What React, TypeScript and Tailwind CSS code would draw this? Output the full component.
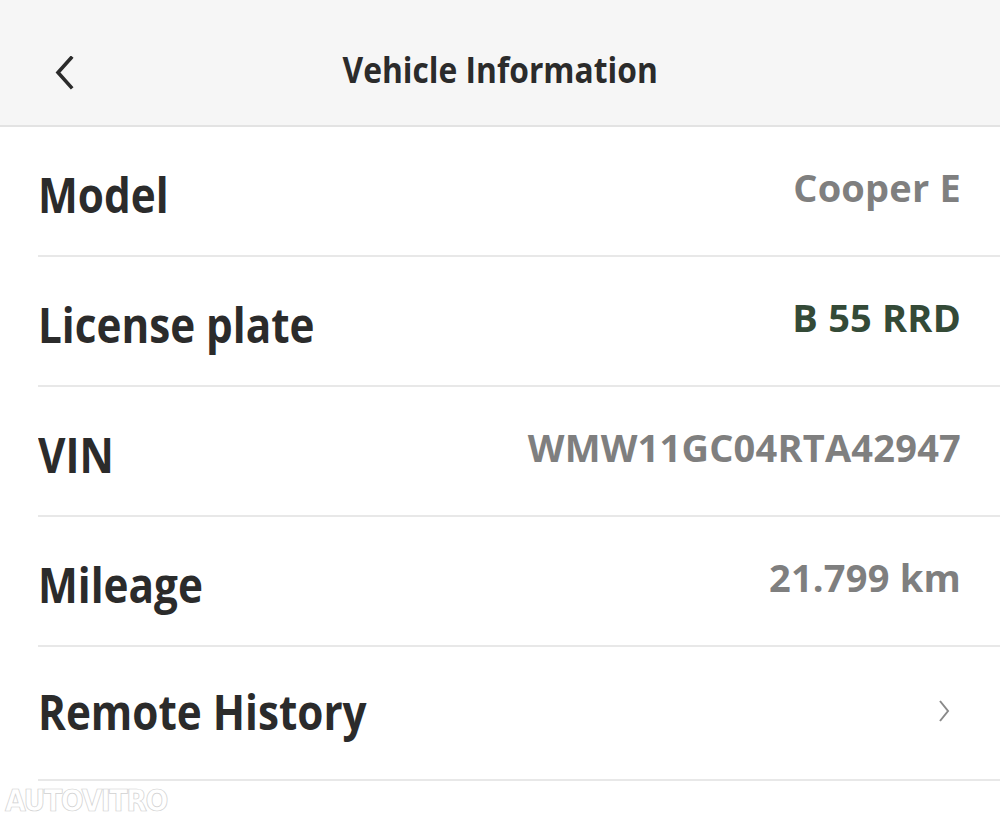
import React from "react";

type Row = {
  label: string;
  value?: string;
  valueClass?: string;
  link?: boolean;
};

const rows: Row[] = [
  { label: "Model", value: "Cooper E", valueClass: "text-[#7f7f7f]" },
  { label: "License plate", value: "B 55 RRD", valueClass: "text-[#344a37]" },
  { label: "VIN", value: "WMW11GC04RTA42947", valueClass: "text-[#7f7f7f]" },
  { label: "Mileage", value: "21.799 km", valueClass: "text-[#7f7f7f]" },
  { label: "Remote History", link: true },
];

const VehicleInfo: React.FC = () => {
  return (
    <div className="relative min-h-screen w-[1000px] bg-white font-['Open_Sans',sans-serif] text-[#2b2b2b]">
      {/* Top bar */}
      <header className="relative flex h-[127px] items-center justify-center border-b-2 border-[#e3e3e3] bg-[#f6f6f6]">
        <button className="absolute left-[48px] top-[52px] p-1">
          <svg width="22" height="34" viewBox="0 0 22 34" fill="none">
            <path d="M19 2 L6 16.5 L19 31" stroke="#2b2b2b" strokeWidth="3.6" strokeLinecap="square" />
          </svg>
        </button>
        <h1 className="mt-[14px] scale-x-[0.895] text-[35.5px] font-bold leading-none">
          Vehicle Information
        </h1>
      </header>

      {/* Rows */}
      <div className="pl-[38px]">
        {rows.map((row) => (
          <div
            key={row.label}
            className={`flex items-center justify-between border-b-2 border-[#e8e8e8] pr-[39px] ${
              row.link ? "h-[134px]" : "h-[130px]"
            }`}
          >
            <span
              className={`inline-block origin-left scale-x-[0.88] text-[48px] font-bold leading-none ${
                row.link ? "-mt-[2px]" : "mt-[7px]"
              }`}
            >
              {row.label}
            </span>
            {row.link ? (
              <svg width="14" height="24" viewBox="0 0 14 24" fill="none" className="mr-[10px] -mt-[4px]">
                <path d="M3 2 L11 12 L3 22" stroke="#8a8a8a" strokeWidth="2" />
              </svg>
            ) : (
              <span className={`-mt-[8px] text-[38px] font-bold leading-none tracking-[0.2px] ${row.valueClass}`}>
                {row.value}
              </span>
            )}
          </div>
        ))}
      </div>

      {/* Watermark */}
      <div className="pl-[5px] pt-[5px] font-['DejaVu_Sans',sans-serif] text-[30px] font-bold leading-none tracking-[-1.5px] text-white [-webkit-text-stroke:0.7px_#d0d0d0] font-stretch-condensed">
        AUTOVITRO
      </div>
    </div>
  );
};

export default function App() {
  return <VehicleInfo />;
}
